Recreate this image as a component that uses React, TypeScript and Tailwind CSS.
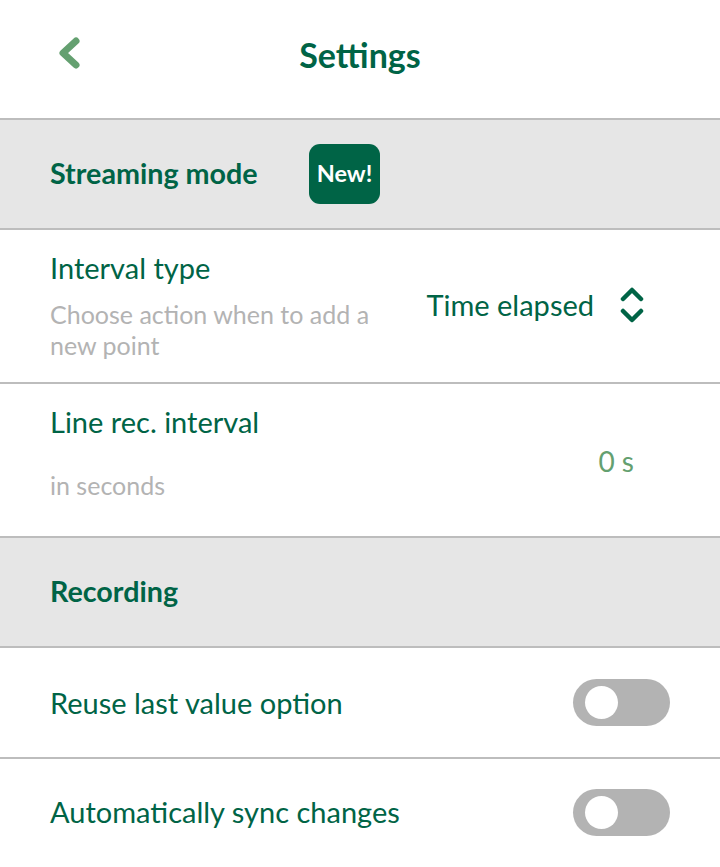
import React from "react";

const green = "text-[#006446]";

function Toggle() {
  return (
    <div className="w-[97px] h-[47px] rounded-full bg-[#b3b3b3] flex items-center pl-[12px]">
      <div className="w-[33px] h-[33px] rounded-full bg-white" />
    </div>
  );
}

function SectionHeader({ title, badge }: { title: string; badge?: string }) {
  return (
    <div className="h-[110px] bg-[#e6e6e6] border-b-2 border-[#bdbdbd] flex items-center pl-[50px]">
      <span className={`text-[28.7px] font-bold ${green}`}>{title}</span>
      {badge && (
        <span className="ml-[51px] h-[60px] px-[8px] rounded-[11px] bg-[#006446] text-white text-[23.5px] font-bold flex items-center">
          {badge}
        </span>
      )}
    </div>
  );
}

export default function App() {
  return (
    <div className="w-[720px] h-[867px] overflow-hidden bg-white font-['Lato',sans-serif]">
      {/* Header */}
      <div className="relative h-[120px] border-b-2 border-[#bdbdbd] flex items-center justify-center">
        <svg
          className="absolute left-[56px] top-[36px]"
          width="28"
          height="34"
          viewBox="0 0 28 34"
          fill="none"
        >
          <path d="M20 5 L7 17 L20 29" stroke="#64a070" strokeWidth="7" strokeLinecap="round" strokeLinejoin="round" />
        </svg>
        <span className={`-mt-[10px] text-[34px] font-bold ${green}`}>Settings</span>
      </div>

      <SectionHeader title="Streaming mode" badge="New!" />

      {/* Interval type */}
      <div className="h-[154px] border-b-2 border-[#bdbdbd] flex pl-[50px] pr-[76px]">
        <div className="flex-1 pt-[20px]">
          <div className={`text-[29px] leading-[36px] ${green}`}>Interval type</div>
          <div className="mt-[13px] w-[345px] text-[25px] leading-[31px] text-[#b3b3b3]">
            Choose action when to add a new point
          </div>
        </div>
        <div className="flex items-center gap-[26px] pb-[2px]">
          <span className={`text-[29px] ${green}`}>Time elapsed</span>
          <svg width="24" height="38" viewBox="0 0 24 38" fill="none">
            <path d="M3 13 L12 4 L21 13" stroke="#006446" strokeWidth="4.5" strokeLinecap="round" strokeLinejoin="round" />
            <path d="M3 25 L12 34 L21 25" stroke="#006446" strokeWidth="4.5" strokeLinecap="round" strokeLinejoin="round" />
          </svg>
        </div>
      </div>

      {/* Line rec interval */}
      <div className="h-[154px] border-b-2 border-[#bdbdbd] flex pl-[50px] pr-[86px]">
        <div className="flex-1 pt-[20px]">
          <div className={`text-[29px] leading-[36px] ${green}`}>Line rec. interval</div>
          <div className="mt-[30px] text-[25px] leading-[31px] text-[#b3b3b3]">in seconds</div>
        </div>
        <div className="flex items-center pt-[2px]">
          <span className="text-[28px] text-[#64a070]">0 s</span>
        </div>
      </div>

      <SectionHeader title="Recording" />

      {/* Reuse */}
      <div className="h-[111px] border-b-2 border-[#bdbdbd] flex items-center justify-between pl-[50px] pr-[50px]">
        <span className={`text-[29px] ${green}`}>Reuse last value option</span>
        <Toggle />
      </div>

      {/* Sync */}
      <div className="h-[106px] flex items-center justify-between pl-[50px] pr-[50px]">
        <span className={`text-[29px] ${green}`}>Automatically sync changes</span>
        <Toggle />
      </div>
    </div>
  );
}
